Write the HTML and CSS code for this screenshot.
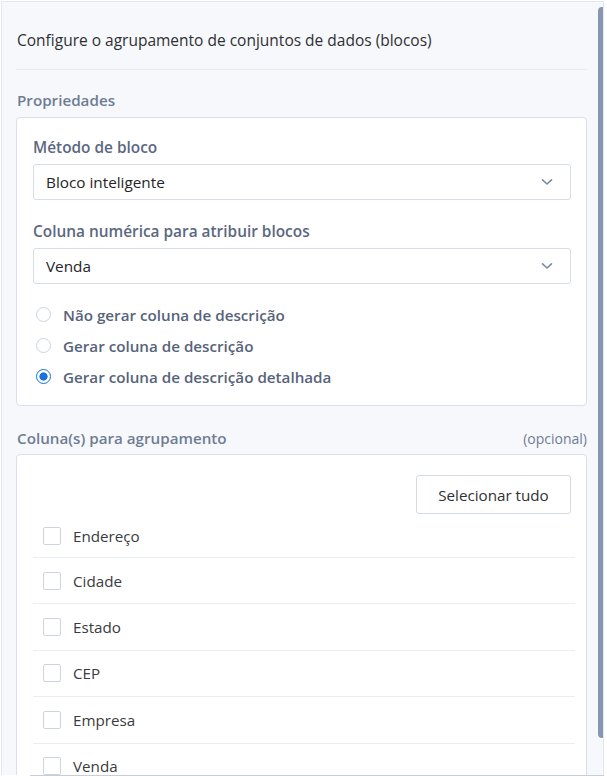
FILE: index.html
```html
<!DOCTYPE html>
<html lang="pt">
<head>
<meta charset="utf-8">
<link rel="stylesheet" href="styles.css">
</head>
<body>
<div class="frame">
  <div class="panel">
    <div class="content">
      <div class="title">Configure o agrupamento de conjuntos de dados (blocos)</div>
      <div class="section-label">Propriedades</div>
      <div class="card props">
        <div class="field-label">Método de bloco</div>
        <div class="select">
          <span>Bloco inteligente</span>
          <svg class="chev" width="12" height="8" viewBox="0 0 12 8"><path d="M1.5 1.8 L6 6 L10.5 1.8" fill="none" stroke="#7d8aa3" stroke-width="1.6" stroke-linecap="round" stroke-linejoin="round"/></svg>
        </div>
        <div class="field-label second">Coluna numérica para atribuir blocos</div>
        <div class="select">
          <span>Venda</span>
          <svg class="chev" width="12" height="8" viewBox="0 0 12 8"><path d="M1.5 1.8 L6 6 L10.5 1.8" fill="none" stroke="#7d8aa3" stroke-width="1.6" stroke-linecap="round" stroke-linejoin="round"/></svg>
        </div>
        <div class="radios">
          <div class="radio"><span class="dot"></span>Não gerar coluna de descrição</div>
          <div class="radio"><span class="dot"></span>Gerar coluna de descrição</div>
          <div class="radio on"><span class="dot"></span>Gerar coluna de descrição detalhada</div>
        </div>
      </div>
      <div class="section-row">
        <span class="section-label">Coluna(s) para agrupamento</span>
        <span class="optional">(opcional)</span>
      </div>
      <div class="card cols">
        <div class="btn-row"><button class="btn">Selecionar tudo</button></div>
        <div class="list">
          <div class="item"><span class="box"></span>Endereço</div>
          <div class="item"><span class="box"></span>Cidade</div>
          <div class="item"><span class="box"></span>Estado</div>
          <div class="item"><span class="box"></span>CEP</div>
          <div class="item"><span class="box"></span>Empresa</div>
          <div class="item"><span class="box"></span>Venda</div>
        </div>
      </div>
    </div>
    <div class="track"><div class="thumb"></div></div>
  </div>
  <div class="bottom-line"></div>
</div>
</body>
</html>
```
FILE: styles.css
```css
html, body {
  margin: 0;
  padding: 0;
  background: #ffffff;
  font-family: "Open Sans", "Noto Sans", sans-serif;
}
.frame {
  width: 604px;
  height: 776px;
  padding-top: 1px;
  box-sizing: border-box;
  overflow: hidden;
  display: flex;
  flex-direction: column;
}
.panel {
  flex: 1;
  min-height: 0;
  display: flex;
  background: #f6f8fc;
  border-top: 1px solid #e3e8f0;
  border-left: 1px solid #e3e8f0;
  border-right: 1px solid #e3e8f0;
  margin-left: 1px;
  overflow: hidden;
}
.content {
  width: 572px;
  padding-left: 13px;
  padding-right: 6px;
  flex: none;
}
.title {
  font-size: 15.5px;
  color: #2f3033;
  height: 68px;
  padding-left: 1px;
  line-height: 20px;
  padding-top: 28px;
  box-sizing: border-box;
  border-bottom: 1px solid #e6eaf1;
  margin-left: 1px;
}
.section-label {
  font-size: 15.2px;
  font-weight: 600;
  color: #6f7c93;
  line-height: 20px;
}
.content > .section-label {
  margin-top: 20px;
  padding-left: 2px;
}
.card {
  background: #ffffff;
  border: 1px solid #d9e0ea;
  border-radius: 4px;
  margin-left: 1px;
}
.props {
  margin-top: 7px;
  padding: 20px 15px 18px 16px;
  height: 289px;
  box-sizing: border-box;
}
.field-label {
  font-size: 15.4px;
  font-weight: 600;
  color: #5b6880;
  line-height: 20px;
}
.field-label.second {
  margin-top: 22px;
}
.select {
  margin-top: 6px;
  height: 36px;
  box-sizing: border-box;
  border: 1px solid #d6dde8;
  border-radius: 3px;
  display: flex;
  align-items: center;
  justify-content: space-between;
  padding: 0 17px 0 12px;
  font-size: 15.3px;
  color: #242528;
}
.radios {
  margin-top: 15px;
  display: flex;
  flex-direction: column;
}
.radio {
  height: 31px;
  display: flex;
  align-items: center;
  font-size: 15.2px;
  font-weight: 600;
  color: #56637a;
}
.dot {
  width: 15px;
  height: 15px;
  box-sizing: border-box;
  border: 1.5px solid #cbd3df;
  border-radius: 50%;
  margin-left: 3px;
  margin-right: 12px;
  background: #fff;
}
.radio.on .dot {
  border: 1.5px solid #1a73d9;
  background: radial-gradient(circle, #1a73d9 0 3.8px, #fff 4.4px);
}
.section-row {
  margin-top: 22px;
  display: flex;
  justify-content: space-between;
  align-items: center;
  padding-left: 2px;
  height: 20px;
}
.optional {
  font-size: 14px;
  color: #6f7c93;
}
.cols {
  margin-top: 6px;
  padding: 20px 15px 0 16px;
  height: 400px;
}
.btn-row {
  display: flex;
  justify-content: flex-end;
}
.btn {
  width: 155px;
  height: 39px;
  border: 1px solid #d3dae5;
  border-radius: 3px;
  background: #ffffff;
  font-family: inherit;
  font-size: 15.2px;
  color: #2f3033;
  padding: 0;
}
.list {
  margin-right: -4px;
}
.item {
  height: 46.4px;
  box-sizing: border-box;
  border-bottom: 1px solid #e9edf4;
  display: flex;
  align-items: center;
  font-size: 15.2px;
  color: #3a3b3e;
}
.item:first-child {
  height: 44px;
}
.box {
  width: 18px;
  height: 18px;
  box-sizing: border-box;
  border: 1.5px solid #cdd4e0;
  border-radius: 2px;
  margin-left: 10px;
  margin-right: 12px;
}
.track {
  flex: 1;
  padding: 5px 0 0 5px;
}
.thumb {
  width: 8px;
  height: 731px;
  border-radius: 4px;
  background: #8696b3;
}
.bottom-line {
  height: 1px;
  margin-left: 30px;
  background: #c9ced6;
}
```
